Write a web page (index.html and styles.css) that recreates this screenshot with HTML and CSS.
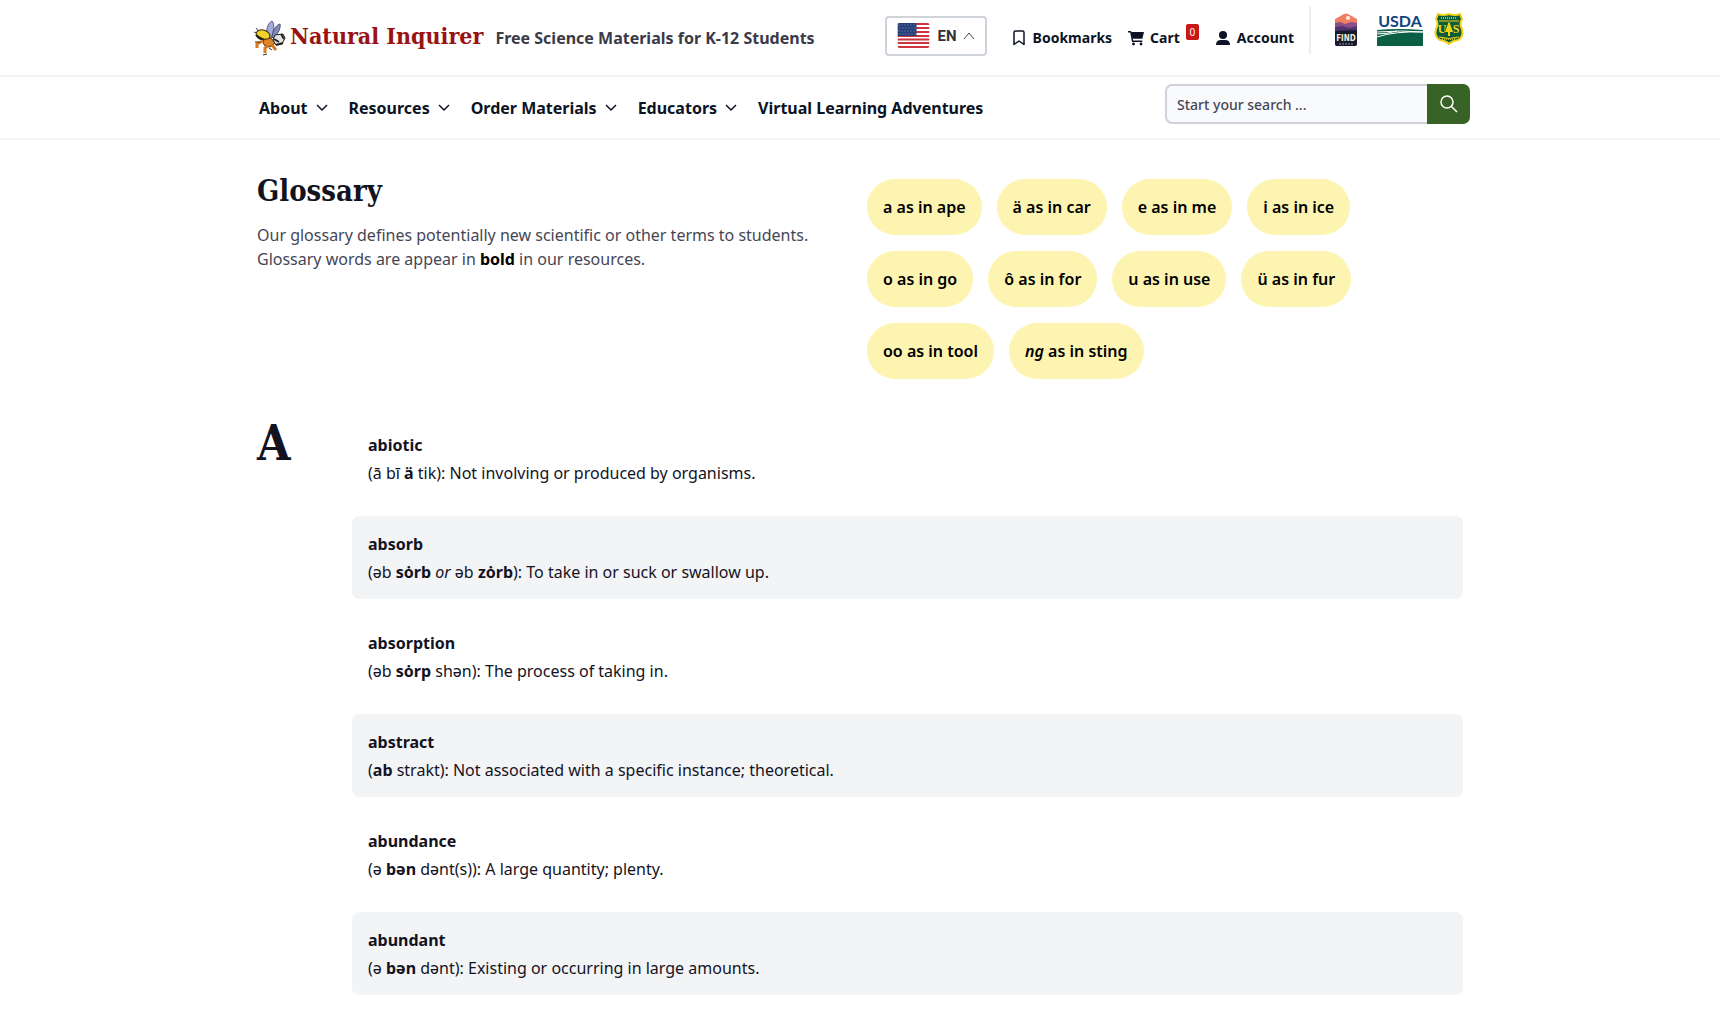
FILE: index.html
```html
<!DOCTYPE html>
<html lang="en">

<head>
    <meta charset="UTF-8">
    <meta name="viewport" content="width=device-width, initial-scale=1.0">
    <title>Glossary | Natural Inquirer</title>
    <link rel="stylesheet" href="styles.css">
</head>

<body>
    <header>
        <div class="top-bar">
            <div class="container top-inner">
                <a href="#" class="brand">
                    <svg class="bee" viewBox="0 0 32 36" aria-hidden="true">
                        <path d="M14 18 C11 10 14 3 18 1 C21 4 20 12 17 18Z" fill="#a3aad6" stroke="#565b8c" />
                        <path d="M18 17 C19 10 22 5 26 4 C27 8 24 14 19 18Z" fill="#8289bb" stroke="#4a4f78" />
                        <path d="M2 8 L5 12 M0 12 L5 14" stroke="#444" fill="none" />
                        <ellipse cx="9" cy="15" rx="7" ry="5" fill="#f3d22b" stroke="#33300f" transform="rotate(15 9 15)" />
                        <path d="M2 15 Q7 20 14 20" stroke="#221f14" stroke-width="2" fill="none" />
                        <path d="M9 20 L17 18 L21 23 L16 27 L10 25Z" fill="#dd8424" stroke="#5c3a17" />
                        <path d="M21 15 L29 14 L31 18 L28 24 L22 25 L19 20Z" fill="#e4e4e2" stroke="#222" />
                        <path d="M20 19 L25 22 M27 14 L30 19 M22 25 L29 23" stroke="#222" stroke-width="2" />
                        <path d="M9 21 L3 24 L3 28 M14 26 L11 28 L11 33 M18 25 L22 30" fill="none" stroke="#d97a21" stroke-width="3" />
                        <path d="M1 22 L6 22 M9 35 L13 34 M15 28 L18 30" stroke="#3b2a17" />
                    </svg>
                    <span class="brand-name">Natural Inquirer</span>
                </a>
                <span class="tagline">Free Science Materials for K-12 Students</span>
                <button type="button" class="lang">
                    <svg class="flag" viewBox="0 0 32 26" aria-hidden="true">
                        <clipPath id="flagShape"><rect width="32" height="25" rx="2" /></clipPath>
                        <g clip-path="url(#flagShape)">
                            <rect width="32" height="25" fill="#fff" />
                            <path d="M0 1h32M0 5h32M0 9h32M0 13h32M0 16.500h32M0 20h32M0 24h32" stroke="#cf3340" stroke-width="2" />
                            <rect width="19" height="13" fill="#263f78" />
                            <path d="M1 2h18M2 5h17M1 8h18M2 11h17" stroke="#8995b8" stroke-dasharray="1 2" />
                        </g>
                    </svg>
                    <span>EN</span>
                    <svg class="lang-caret" viewBox="0 0 12 12" aria-hidden="true"><path d="M1 9 L6 3 L11 9" /></svg>
                </button>
                <div class="user-links">
                    <a href="#">
                        <svg viewBox="0 0 14 16" aria-hidden="true"><path d="M2 2.500 Q2 1 3.500 1 H10.500 Q12 1 12 2.500 V14.500 L7 11 L2 14.500Z" fill="none" stroke="#0b1324" stroke-width="1.500" stroke-linejoin="round" /></svg>
                        Bookmarks
                    </a>
                    <a href="#" class="cart">
                        <svg viewBox="0 0 16 16" aria-hidden="true">
                            <path d="M3 2 H16 L14.300 8.800 H4.500Z" />
                            <path d="M0 1.700 H2.700 L4.600 11.300 H14.300" fill="none" stroke="#0b1324" stroke-width="1.400" stroke-linejoin="round" />
                            <circle cx="5.500" cy="14" r="1.400" />
                            <circle cx="13" cy="14" r="1.400" />
                        </svg>
                        Cart <span class="badge">0</span>
                    </a>
                    <a href="#">
                        <svg viewBox="0 0 14 16" aria-hidden="true"><circle cx="7" cy="5" r="4" /><path d="M0 15 Q0 10 5 10 H9 Q14 10 14 15Z" /></svg>
                        Account
                    </a>
                </div>
                <div class="partners">
                    <a href="#" aria-label="Find Outdoors">
                        <svg class="find" viewBox="0 0 24 34">
                            <path d="M1 6 L10 1 Q12 0 14 1 L23 6 V31 Q23 33 21 33 H3 Q1 33 1 31Z" fill="#ee7f64" />
                            <circle cx="14" cy="5" r="2" fill="#fff1d8" />
                            <path d="M1 10 L6 9 L11 11 L17 9 L23 10 V20 H1Z" fill="#8a4f88" />
                            <path d="M1 14 L8 13 L15 15 L23 13 V20 H1Z" fill="#51346f" />
                            <path d="M1 18 L23 17 V31 Q23 33 21 33 H3 Q1 33 1 31Z" fill="#161b30" />
                            <text x="12" y="28" text-anchor="middle" class="find-text">FIND</text>
                            <path d="M5 31h14" stroke="#9b9388" stroke-dasharray="2 1" />
                        </svg>
                    </a>
                    <a href="#" aria-label="USDA">
                        <svg class="usda" viewBox="0 0 46 33">
                            <text x="23" y="14" text-anchor="middle" class="usda-text">USDA</text>
                            <path d="M0 17 Q20 15 46 17 V33 H0Z" fill="#0b5f44" />
                            <path d="M0 19 Q24 17 46 19 M0 24 Q18 18 46 19 M0 21 Q10 21 20 18" fill="none" stroke="#fff" stroke-width="1" />
                        </svg>
                    </a>
                    <a href="#" aria-label="US Forest Service">
                        <svg class="shield" viewBox="0 0 28 32">
                            <path d="M3 1 Q8 3 14 1 Q20 3 25 1 L27 6 Q24 11 27 16 Q29 24 23 27 Q17 28 14 31 Q11 28 5 27 Q-1 24 1 16 Q4 11 1 6Z" fill="#0c5c38" stroke="#f2d31b" stroke-width="2" />
                            <path d="M4 8h20M4 24 Q14 27 24 24" fill="none" stroke="#f2d31b" stroke-width="1" />
                            <path d="M6 5h16M7 26h14" stroke="#b9b52d" stroke-width="2" stroke-dasharray="1 1" />
                            <text x="7" y="20" text-anchor="middle" class="shield-text">U</text>
                            <text x="21" y="20" text-anchor="middle" class="shield-text">S</text>
                            <path d="M14 8 L18 19 H15 V23 H13 V19 H10Z" fill="#f2d31b" stroke="#0c5c38" stroke-width="1" paint-order="stroke" />
                        </svg>
                    </a>
                </div>
            </div>
        </div>
        <div class="nav-bar">
            <div class="container nav-inner">
                <nav>
                    <a href="#">About <svg viewBox="0 0 12 8"><path d="M1 1 L6 6 L11 1" /></svg></a>
                    <a href="#">Resources <svg viewBox="0 0 12 8"><path d="M1 1 L6 6 L11 1" /></svg></a>
                    <a href="#">Order Materials <svg viewBox="0 0 12 8"><path d="M1 1 L6 6 L11 1" /></svg></a>
                    <a href="#">Educators <svg viewBox="0 0 12 8"><path d="M1 1 L6 6 L11 1" /></svg></a>
                    <a href="#">Virtual Learning Adventures</a>
                </nav>
                <form class="search">
                    <input type="search" aria-label="Search" placeholder="Start your search ...">
                    <button type="submit" aria-label="Submit search">
                        <svg viewBox="0 0 18 18"><circle cx="7" cy="7" r="6" /><path d="M11 11 L17 17" /></svg>
                    </button>
                </form>
            </div>
        </div>
    </header>

    <main>
        <section class="intro">
            <div>
                <h1>Glossary</h1>
                <p>Our glossary defines potentially new scientific or other terms to students. Glossary words are appear in <b>bold</b> in our resources.</p>
            </div>
            <ul class="sounds">
                <li>a as in ape</li>
                <li>ä as in car</li>
                <li>e as in me</li>
                <li>i as in ice</li>
                <li>o as in go</li>
                <li>ô as in for</li>
                <li>u as in use</li>
                <li>ü as in fur</li>
                <li>oo as in tool</li>
                <li><i>ng</i> as in sting</li>
            </ul>
        </section>

        <section class="letter-group">
            <h2>A</h2>
            <dl>
                <div class="term">
                    <dt>abiotic</dt>
                    <dd>(ā bī <b>ä</b> tik): Not involving or produced by organisms.</dd>
                </div>
                <div class="term">
                    <dt>absorb</dt>
                    <dd>(əb <b>sȯrb</b> <i>or</i> əb <b>zȯrb</b>): To take in or suck or swallow up.</dd>
                </div>
                <div class="term">
                    <dt>absorption</dt>
                    <dd>(əb <b>sȯrp</b> shən): The process of taking in.</dd>
                </div>
                <div class="term">
                    <dt>abstract</dt>
                    <dd>(<b>ab</b> strakt): Not associated with a specific instance; theoretical.</dd>
                </div>
                <div class="term">
                    <dt>abundance</dt>
                    <dd>(ə <b>bən</b> dənt(s)): A large quantity; plenty.</dd>
                </div>
                <div class="term">
                    <dt>abundant</dt>
                    <dd>(ə <b>bən</b> dənt): Existing or occurring in large amounts.</dd>
                </div>
            </dl>
        </section>
    </main>
</body>

</html>
```
FILE: styles.css
```css
* {
    box-sizing: border-box;
}

body {
    margin: 0;
    font-family: "Noto Sans", sans-serif;
    font-size: 16px;
    line-height: 24px;
    color: #13131f;
    background-color: #fff;
}

a {
    color: inherit;
    text-decoration: none;
}

.container {
    max-width: 1216px;
    margin: 0 auto;
    display: flex;
    align-items: center;
}

/* Top bar */
.top-bar {
    border-bottom: 2px solid #f3f4f8;
}

.top-inner {
    height: 75px;
    padding: 0 5px 0 2px;
}

.brand {
    display: flex;
    align-items: center;
    gap: 4px;
}

.bee {
    width: 32px;
    height: 36px;
}

.brand-name {
    padding-bottom: 4px;
    font-family: "Roboto Slab", "DejaVu Serif Condensed", "DejaVu Serif", serif;
    font-size: 23px;
    font-weight: bold;
    color: #991313;
    white-space: nowrap;
}

.tagline {
    margin-left: 12px;
    font-weight: bold;
    color: #3a3a48;
    white-space: nowrap;
}

.lang {
    display: flex;
    align-items: center;
    width: 102px;
    height: 40px;
    margin: 0 0 4px auto;
    padding: 0 10px;
    border: 2px solid #ced4da;
    border-radius: 4px;
    background-color: #fff;
    font-family: Roboto, sans-serif;
    font-size: 15px;
    font-weight: bold;
    color: #333;
}

.flag {
    width: 33px;
    height: 26px;
    margin-right: 8px;
}

.lang-caret {
    width: 12px;
    height: 12px;
    margin-left: 6px;
    fill: none;
    stroke: #444;
}

.user-links {
    display: flex;
    gap: 16px;
    margin-left: 25px;
    font-size: 14px;
    font-weight: bold;
    color: #0b1324;
}

.user-links a {
    display: flex;
    align-items: center;
    gap: 7px;
}

.user-links .cart {
    gap: 6px;
    margin-right: 1px;
}

.user-links svg {
    height: 16px;
    fill: #0b1324;
}

.badge {
    align-self: flex-start;
    width: 13px;
    height: 16px;
    margin-top: -2px;
    border-radius: 2px;
    background-color: #c81717;
    font-size: 10px;
    font-weight: normal;
    line-height: 16px;
    text-align: center;
    color: #fff;
}

.partners {
    display: flex;
    align-items: flex-start;
    align-self: flex-start;
    height: 48px;
    margin: 6px 0 0 15px;
    padding: 7px 0 0 23px;
    border-left: 2px solid #eeeff5;
}

.partners svg {
    display: block;
    overflow: visible;
}

.find {
    width: 24px;
    height: 34px;
    margin-right: 19px;
}

.usda {
    width: 46px;
    height: 33px;
    margin-right: 12px;
}

.shield {
    width: 28px;
    height: 32px;
}

.find-text {
    font: bold 8px "DejaVu Sans Condensed", sans-serif;
    fill: #f5ead7;
}

.usda-text {
    font: bold 16px Lato, sans-serif;
    fill: #11437d;
}

.shield-text {
    font: bold 12px "Liberation Serif", serif;
    fill: #f2d31b;
}

/* Navigation */
.nav-bar {
    border-bottom: 2px solid #f6f6f9;
}

.nav-inner {
    justify-content: space-between;
    height: 61px;
    padding-left: 7px;
}

nav {
    display: flex;
    gap: 21px;
    font-weight: bold;
    color: #0b1324;
}

nav a {
    display: flex;
    align-items: center;
    gap: 8px;
}

nav svg {
    width: 12px;
    height: 8px;
    fill: none;
    stroke: #0b1324;
    stroke-width: 1.5;
}

.search {
    display: flex;
    width: 305px;
    height: 40px;
    margin: 0 -2px 7px 0;
}

.search input {
    flex: 1;
    min-width: 0;
    padding: 0 10px;
    border: 2px solid #d1d1db;
    border-right: 0;
    border-radius: 7px 0 0 7px;
    background-color: #f9fafb;
    font-family: inherit;
    font-size: 14px;
    font-weight: 500;
}

.search input::placeholder {
    color: #464655;
    opacity: 1;
}

.search button {
    display: flex;
    align-items: center;
    justify-content: center;
    width: 43px;
    padding: 0;
    border: 0;
    border-radius: 0 7px 7px 0;
    background-color: #386326;
}

.search button svg {
    width: 18px;
    height: 18px;
    fill: none;
    stroke: #fff;
    stroke-width: 1.5;
}

/* Glossary */
main {
    max-width: 1206px;
    margin: 0 auto;
}

.intro {
    display: grid;
    grid-template-columns: 1fr 1fr;
    gap: 14px;
    padding-top: 39px;
}

h1,
h2 {
    margin: 0;
    font-family: "Roboto Slab", "DejaVu Serif Condensed", "DejaVu Serif", serif;
    font-weight: bold;
}

h1 {
    margin-top: -8px;
    font-size: 29px;
    line-height: 40px;
}

.intro p {
    max-width: 560px;
    margin: 12px 0 0;
    color: #464655;
}

.intro p b {
    color: #000;
}

.sounds {
    display: flex;
    flex-wrap: wrap;
    gap: 16px 15px;
    max-width: 500px;
    margin: 0;
    padding: 0;
    list-style: none;
    font-weight: 600;
    color: #000;
}

.sounds li {
    padding: 16px;
    border-radius: 28px;
    background-color: #fdf4b2;
}

.letter-group {
    display: grid;
    grid-template-columns: 95px 1fr;
    margin-top: 38px;
}

h2 {
    font-size: 48px;
    line-height: 52px;
}

dl {
    display: flex;
    flex-direction: column;
    gap: 16px;
    margin: 0;
}

.term {
    padding: 16px 16px 15px;
    border-radius: 7px;
}

.term:nth-child(even) {
    background-color: #f3f4f6;
}

dt {
    margin-bottom: 4px;
    font-weight: bold;
}

dd {
    margin: 0;
}
```
